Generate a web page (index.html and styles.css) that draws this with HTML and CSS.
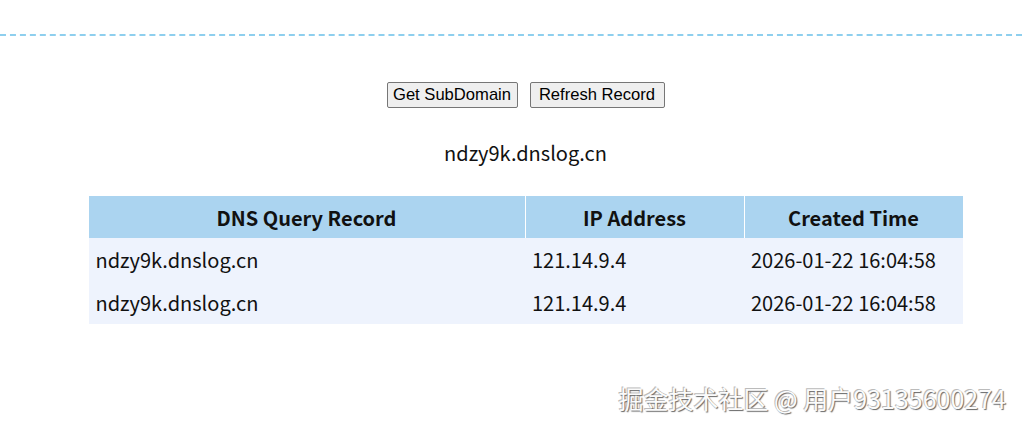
FILE: index.html
```html
<!DOCTYPE html>
<html>
<head>
<meta charset="utf-8">
<link rel="stylesheet" href="styles.css">
</head>
<body>
<div class="page">
  <div class="divider"></div>
  <div class="content">
    <div class="actions">
      <button class="btn btn-get">Get SubDomain</button>
      <button class="btn btn-refresh">Refresh Record</button>
    </div>
    <div class="domain">ndzy9k.dnslog.cn</div>
    <table class="records">
      <thead>
        <tr><th class="c1">DNS Query Record</th><th class="c2">IP Address</th><th class="c3">Created Time</th></tr>
      </thead>
      <tbody>
        <tr><td>ndzy9k.dnslog.cn</td><td>121.14.9.4</td><td>2026-01-22 16:04:58</td></tr>
        <tr><td>ndzy9k.dnslog.cn</td><td>121.14.9.4</td><td>2026-01-22 16:04:58</td></tr>
      </tbody>
    </table>
  </div>
  <div class="watermark">掘金技术社区 @ 用户93135600274</div>
</div>
</body>
</html>
```
FILE: styles.css
```css
html, body {
  margin: 0;
  padding: 0;
  background: #fff;
}
.page {
  position: relative;
  width: 1022px;
  height: 428px;
  overflow: hidden;
  font-family: "Noto Sans CJK SC", "Noto Sans", sans-serif;
  color: #111;
}
.divider {
  margin-top: 34px;
  border-top: 2px dashed #8ecfee;
}
.content {
  padding-left: 29px;
  display: flex;
  flex-direction: column;
  align-items: center;
}
.actions {
  margin-top: 46px;
  display: flex;
  gap: 12px;
}
.btn {
  font-family: "Liberation Sans", Arial, sans-serif;
  font-size: 16.6px;
  height: 26px;
  padding: 0;
  white-space: nowrap;
  background: #efefef;
  border: 1px solid #767676;
  border-radius: 2px;
  color: #000;
}
.btn-get { width: 131px; }
.btn-refresh { width: 135px; }
.domain {
  margin-top: 32px;
  font-size: 20px;
  line-height: 26px;
}
.records {
  margin-top: 30px;
  width: 874px;
  border-collapse: collapse;
  font-size: 20px;
}
.records th {
  background: #abd4f0;
  font-weight: bold;
  height: 42px;
  padding: 0;
  text-align: center;
  border-right: 1px solid #fff;
}
.records th:last-child { border-right: none; }
.records .c1 { width: 436px; }
.records .c2 { width: 218px; }
.records td {
  background: #eef3fd;
  height: 43px;
  padding: 0 7px;
  text-align: left;
}
.watermark {
  position: absolute;
  right: 16px;
  top: 380px;
  font-size: 25px;
  color: #fbfbfb;
  text-shadow: 1px 1px 1px #666, -1px -1px 0 #bbb;
  white-space: nowrap;
}
```
